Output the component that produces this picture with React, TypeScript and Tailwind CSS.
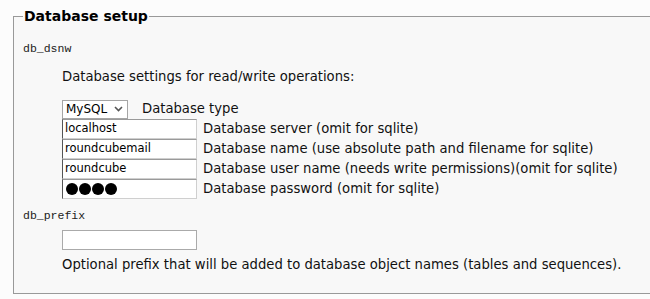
import React from "react";

const sans = { fontFamily: '"DejaVu Sans", Verdana, sans-serif' };
const mono = { fontFamily: '"Liberation Mono", "Courier New", monospace' };

function Row({ value, label, password }: { value: string; label: string; password?: boolean }) {
  return (
    <div className="flex items-center h-[20px]">
      <div className="w-[135px] h-[20px] bg-white border border-t-[#9a9a9a] border-l-[#555] border-r-[#cfcfcf] border-b-[#cfcfcf] flex items-center pl-[2px] text-[11.5px] text-black">
        {password ? (
          <div className="flex gap-[1px] pl-[1px]">
            <span className="w-[12px] h-[12px] rounded-full bg-black" />
            <span className="w-[12px] h-[12px] rounded-full bg-black" />
            <span className="w-[12px] h-[12px] rounded-full bg-black" />
            <span className="w-[12px] h-[12px] rounded-full bg-black" />
          </div>
        ) : (
          value
        )}
      </div>
      <span className="ml-[6px] text-[13.2px] text-[#111]">{label}</span>
    </div>
  );
}

export default function App() {
  return (
    <div className="w-[650px] h-[299px] overflow-hidden bg-[#fcfcfc]" style={sans}>
      <fieldset className="ml-[13px] mt-[6px] w-[700px] h-[288px] border border-[#999] bg-[#f8f8f8] pl-[9px]">
        <legend className="px-[1px] text-[14px] font-bold text-black">Database setup</legend>
        <div className="mt-[13px] text-[11.5px] text-[#222]" style={mono}>db_dsnw</div>
        <div className="ml-[39px] mt-[10px] text-[13.2px] text-[#111]">Database settings for read/write operations:</div>
        <div className="ml-[39px] mt-[12px]">
          <div className="flex items-center h-[20px]">
            <div className="w-[66px] h-[19px] bg-white border border-[#a5a5a5] flex items-center justify-between pl-[3px] pr-[4px] text-[12px] text-black">
              <span>MySQL</span>
              <svg width="9" height="6" viewBox="0 0 9 6"><path d="M1 1 L4.5 4.5 L8 1" stroke="#555" strokeWidth="1.6" fill="none" /></svg>
            </div>
            <span className="ml-[14px] text-[13.2px] text-[#111]">Database type</span>
          </div>
          <Row value="localhost" label="Database server (omit for sqlite)" />
          <Row value="roundcubemail" label="Database name (use absolute path and filename for sqlite)" />
          <Row value="roundcube" label="Database user name (needs write permissions)(omit for sqlite)" />
          <Row value="" password label="Database password (omit for sqlite)" />
        </div>
        <div className="mt-[8px] text-[11.5px] text-[#222]" style={mono}>db_prefix</div>
        <div className="ml-[39px] mt-[6px] w-[135px] h-[20px] bg-white border border-[#aaa]" />
        <div className="ml-[39px] mt-[5px] text-[13.2px] text-[#111]">Optional prefix that will be added to database object names (tables and sequences).</div>
      </fieldset>
    </div>
  );
}
